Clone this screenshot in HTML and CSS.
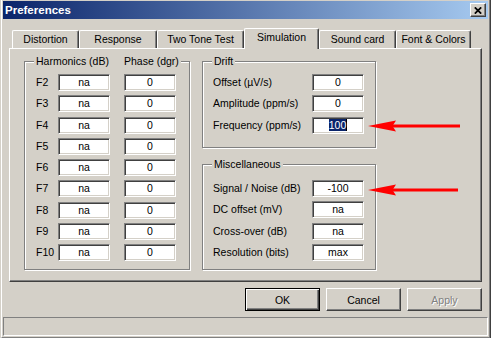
FILE: index.html
```html
<!DOCTYPE html>
<html lang="en">
  <head>
    <meta charset="UTF-8" />
    <meta name="viewport" content="width=device-width, initial-scale=1.0" />
    <title>Preferences</title>
    <link rel="stylesheet" href="styles.css">
  </head>
  <body>
    <div class="window">
      <div class="frame">
        <div class="titlebar">
          <span class="title">Preferences</span>
          <button class="close">
            <svg width="8" height="7" viewBox="0 0 8 7"><path d="M0.8 0.3l6.4 6.4M7.2 0.3l-6.4 6.4" stroke="#000" stroke-width="1.7"/></svg>
          </button>
        </div>

        <div class="tabs">
          <div class="tab tab-distortion">Distortion</div>
          <div class="tab tab-response">Response</div>
          <div class="tab tab-twotone">Two Tone Test</div>
          <div class="tab tab-simulation active">Simulation</div>
          <div class="tab tab-soundcard">Sound card</div>
          <div class="tab tab-font">Font &amp; Colors</div>
        </div>

        <div class="panel">
          <fieldset class="group harmonics">
            <legend><span class="col-harm">Harmonics (dB)</span><span>Phase (dgr)</span></legend>
            <div class="harm-grid">
              <span class="lbl">F2</span><span class="field">na</span><span class="field">0</span>
              <span class="lbl">F3</span><span class="field">na</span><span class="field">0</span>
              <span class="lbl">F4</span><span class="field">na</span><span class="field">0</span>
              <span class="lbl">F5</span><span class="field">na</span><span class="field">0</span>
              <span class="lbl">F6</span><span class="field">na</span><span class="field">0</span>
              <span class="lbl">F7</span><span class="field">na</span><span class="field">0</span>
              <span class="lbl">F8</span><span class="field">na</span><span class="field">0</span>
              <span class="lbl">F9</span><span class="field">na</span><span class="field">0</span>
              <span class="lbl">F10</span><span class="field">na</span><span class="field">0</span>
            </div>
          </fieldset>

          <div class="right-col">
            <fieldset class="group drift">
              <legend>Drift</legend>
              <div class="form-grid">
                <span class="lbl">Offset (&micro;V/s)</span><span class="field">0</span>
                <span class="lbl">Amplitude (ppm/s)</span><span class="field">0</span>
                <span class="lbl">Frequency (ppm/s)</span><span class="field"><span class="sel">100</span></span>
              </div>
            </fieldset>

            <fieldset class="group misc">
              <legend>Miscellaneous</legend>
              <div class="form-grid">
                <span class="lbl">Signal / Noise (dB)</span><span class="field">-100</span>
                <span class="lbl">DC offset (mV)</span><span class="field">na</span>
                <span class="lbl">Cross-over (dB)</span><span class="field">na</span>
                <span class="lbl">Resolution (bits)</span><span class="field">max</span>
              </div>
            </fieldset>
          </div>
        </div>

        <div class="buttons">
          <button class="btn default">OK</button>
          <button class="btn">Cancel</button>
          <button class="btn" disabled>Apply</button>
        </div>

        <div class="statusbar"></div>
      </div>

      <!-- red annotation arrows -->
      <svg class="arrows" width="491" height="338" viewBox="0 0 491 338">
        <g fill="#ff0000">
          <path d="M368 126L396 120.5L392.5 126L396 131.5Z"/>
          <rect x="390" y="124.5" width="70" height="3"/>
          <path d="M368 190L396 184.5L392.5 190L396 195.5Z"/>
          <rect x="390" y="188.5" width="68" height="3"/>
        </g>
      </svg>
    </div>
  </body>
</html>
```

FILE: styles.css
```css
body {
  margin: 0;
  background: #d4d0c8;
  font-family: "Liberation Sans", Arial, sans-serif;
  font-size: 10.5px;
  color: #000;
}

.window {
  position: relative;
  width: 491px;
  height: 338px;
  box-sizing: border-box;
  background: #d4d0c8;
  border-left: 1px solid #d4d0c8;
  border-right: 1px solid #404040;
}

.frame {
  height: 100%;
  box-sizing: border-box;
  border-left: 1px solid #fff;
  border-right: 1px solid #808080;
  border-bottom: 1px solid #808080;
  padding: 1px;
  display: flex;
  flex-direction: column;
}

/* title bar */
.titlebar {
  height: 18px;
  flex: none;
  display: flex;
  align-items: center;
  justify-content: space-between;
  padding: 0 2px;
  background: linear-gradient(to right, #0a246a, #a6caf0);
}
.title {
  color: #fff;
  font-weight: bold;
  font-size: 11.5px;
}
.close {
  width: 16px;
  height: 14px;
  padding: 0;
  display: flex;
  align-items: center;
  justify-content: center;
  background: #d4d0c8;
  border: 1px solid;
  border-color: #fff #404040 #404040 #fff;
  box-shadow: inset -1px -1px #808080;
}

/* tabs */
.tabs {
  flex: none;
  height: 20px;
  margin-top: 9px;
  padding-left: 9px;
  display: flex;
  align-items: flex-end;
}
.tab {
  height: 18px;
  box-sizing: border-box;
  border-top: 1px solid #fff;
  border-left: 1px solid #fff;
  border-right: 1px solid #404040;
  box-shadow: inset -1px 0 #808080;
  border-radius: 2px 2px 0 0;
  line-height: 17px;
  text-align: center;
  white-space: nowrap;
}
.tab.active {
  position: relative;
  z-index: 1;
  height: 21px;
  margin-bottom: -1px;
  line-height: 16px;
  padding-bottom: 4px;
  background: #d4d0c8;
}
.tab-distortion { width: 67px; }
.tab-response { width: 78px; }
.tab-twotone { width: 87px; }
.tab-simulation { width: 75px; }
.tab-soundcard { width: 77px; }
.tab-font { width: 75px; }

.panel {
  flex: none;
  height: 234px;
  box-sizing: border-box;
  margin: 0 6px;
  padding: 6px 0 0 14px;
  border: 1px solid;
  border-color: #fff #404040 #404040 #fff;
  box-shadow: inset -1px -1px #808080;
  display: flex;
  align-items: flex-start;
  gap: 12px;
}

/* group boxes */
.group {
  margin: 0;
  padding: 0;
  min-inline-size: 0;
  box-sizing: border-box;
  border: 1px solid #808080;
  box-shadow: inset 1px 1px #fff, 1px 1px #fff;
}
.group legend {
  margin-left: 9px;
  padding: 0 2px;
  line-height: 13px;
  background: #d4d0c8;
}
.col-harm {
  display: inline-block;
  width: 88px;
}
.harmonics {
  width: 166px;
}
.harm-grid {
  display: grid;
  grid-template-columns: 22px 66px 52px;
  grid-auto-rows: 17px;
  row-gap: 4.25px;
  padding: 6px 13px 8px 11px;
}

.right-col {
  width: 174px;
  display: flex;
  flex-direction: column;
  gap: 10px;
}
.form-grid {
  display: grid;
  grid-template-columns: 99px 52px;
  grid-auto-rows: 17px;
  row-gap: 4.25px;
  padding: 6px 0 13.5px 10px;
}
.misc .form-grid {
  padding-top: 9px;
  padding-bottom: 8.25px;
}

.lbl {
  line-height: 17px;
  white-space: nowrap;
}
.field {
  width: 52px;
  height: 17px;
  box-sizing: border-box;
  background: #fff;
  border: 1px solid;
  border-color: #808080 #fff #fff #808080;
  box-shadow: inset 1px 1px #404040, inset -1px -1px #d4d0c8;
  text-align: center;
  line-height: 15px;
}
.sel {
  background: #0a246a;
  color: #fff;
  border-right: 1px solid #000;
}

/* dialog buttons */
.buttons {
  flex: none;
  display: flex;
  justify-content: flex-end;
  gap: 6px;
  margin: 6px 6px 0;
}
.btn {
  width: 75px;
  height: 23px;
  padding: 0;
  font: inherit;
  color: #000;
  background: #d4d0c8;
  border: 1px solid;
  border-color: #fff #404040 #404040 #fff;
  box-shadow: inset -1px -1px #808080;
}
.btn.default {
  border-color: #000;
  box-shadow: inset 1px 1px #fff, inset -1px -1px #404040, inset -2px -2px #808080;
}
.btn:disabled {
  color: #808080;
  text-shadow: 1px 1px #fff;
}

.statusbar {
  flex: none;
  height: 19px;
  box-sizing: border-box;
  margin-top: 6px;
  border: 1px solid;
  border-color: #808080 #fff #fff #808080;
}

.arrows {
  position: absolute;
  left: -1px;
  top: 0;
  pointer-events: none;
}
```
